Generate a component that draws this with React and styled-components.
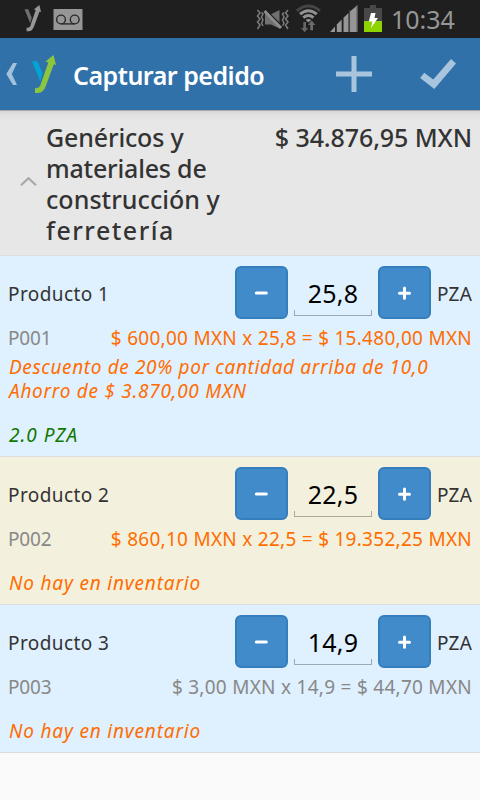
import React from 'react';
import styled, { createGlobalStyle } from 'styled-components';

const GlobalStyle = createGlobalStyle`
  * { box-sizing: border-box; }
  body {
    margin: 0;
    background: #fafafa;
    font-family: "Noto Sans", sans-serif;
    color: #333;
  }
`;

const Screen = styled.div`
  display: flex;
  flex-direction: column;
  width: 480px;
  height: 800px;
  overflow: hidden;
  background: #fafafa;
`;

const StatusBar = styled.div`
  display: flex;
  align-items: flex-start;
  height: 38px;
  flex: none;
  padding-left: 24px;
  background: #1f1f1f;
`;

const StatusIcon = styled.svg`
  flex: none;
  margin-left: ${(p) => p.$gap || 0}px;
`;

const Clock = styled.span`
  margin-left: 8px;
  font-size: 25px;
  line-height: 38px;
  color: #969696;
`;

const ActionBar = styled.header`
  display: flex;
  align-items: center;
  height: 72px;
  flex: none;
  background: #3071a9;
`;

const BarTitle = styled.h1`
  flex: 1;
  margin: 0 0 0 16px;
  padding-top: 1px;
  font-size: 25px;
  line-height: 34px;
  font-weight: 600;
  letter-spacing: -0.5px;
  white-space: nowrap;
  color: #fff;
`;

const BarButton = styled.button`
  display: flex;
  padding: 0;
  border: 0;
  background: none;
`;

const GroupHeader = styled.section`
  display: flex;
  height: 146px;
  flex: none;
  padding: 12px 8px 0 20px;
  border-bottom: 1px solid #dfdfdf;
  background: linear-gradient(#a9a9a9 0, #a9a9a9 1px, #d6d6d6 1px, #e2e2e2 5px, #e7e7e7 12px);
`;

const Chevron = styled.svg`
  flex: none;
  margin: 54px 9px 0 0;
`;

const GroupTitle = styled.h2`
  width: 200px;
  margin: 0;
  font-size: 25px;
  line-height: 31px;
  font-weight: 500;
`;

const TitleLine = styled.span`
  display: block;
  letter-spacing: ${(p) => p.$spacing}px;
`;

const GroupTotal = styled.span`
  margin-left: auto;
  font-size: 25px;
  line-height: 31px;
  font-weight: 500;
  letter-spacing: -0.1px;
  white-space: nowrap;
`;

const Row = styled.section`
  flex: none;
  padding: 10px 8px 9px;
  border-bottom: 1px solid #dcdcdc;
  background: ${(p) => (p.$highlight ? '#f3f1dd' : '#dff0ff')};
  font-size: 19px;
  line-height: 24px;
`;

const QuantityLine = styled.div`
  display: flex;
  align-items: center;
  gap: 6px;
  height: 53px;
`;

const ProductName = styled.span`
  flex: 1;
  padding-top: 2px;
  letter-spacing: 0.4px;
`;

const StepButton = styled.button`
  display: flex;
  align-items: center;
  justify-content: center;
  width: 53px;
  height: 53px;
  padding: 0;
  border: 2px solid #357ebd;
  border-radius: 6px;
  background: #428bca;
`;

const Quantity = styled.div`
  display: flex;
  flex-direction: column;
  justify-content: flex-end;
  width: 78px;
  height: 53px;
  padding-bottom: 3px;
  font-size: 25px;
  line-height: 34px;
  letter-spacing: 0.2px;
  text-align: center;
  color: #000;
`;

const Underline = styled.div`
  height: 6px;
  border: 1px solid ${(p) => (p.$highlight ? '#aaa99b' : '#9ca8b3')};
  border-top: 0;
`;

const Unit = styled.span`
  width: 35px;
  padding-top: 2px;
  letter-spacing: 0.3px;
`;

const PriceLine = styled.div`
  display: flex;
  justify-content: space-between;
  margin-top: 7px;
  white-space: nowrap;
`;

const Code = styled.span`
  letter-spacing: -0.15px;
  color: #888;
`;

const Price = styled.span`
  letter-spacing: 0.27px;
  color: ${(p) => (p.$muted ? '#888' : '#ff6d00')};
`;

const Note = styled.p`
  margin: ${(p) => p.$top}px 0 0 1px;
  font-style: italic;
  letter-spacing: ${(p) => p.$spacing}px;
  white-space: nowrap;
  color: ${(p) => (p.$stock ? '#117700' : '#ff6d00')};
`;

const products = [
  {
    name: 'Producto 1', code: 'P001', quantity: '25,8',
    price: '$ 600,00 MXN x 25,8 = $ 15.480,00 MXN',
    notes: [
      { text: 'Descuento de 20% por cantidad arriba de 10,0', top: 5, spacing: 0.63 },
      { text: 'Ahorro de $ 3.870,00 MXN', top: 0, spacing: 0.72 },
      { text: '2.0 PZA', top: 20, spacing: 1, stock: true },
    ],
  },
  {
    name: 'Producto 2', code: 'P002', quantity: '22,5', highlight: true,
    price: '$ 860,10 MXN x 22,5 = $ 19.352,25 MXN',
    notes: [{ text: 'No hay en inventario', top: 20, spacing: 0.82 }],
  },
  {
    name: 'Producto 3', code: 'P003', quantity: '14,9', muted: true,
    price: '$ 3,00 MXN x 14,9 = $ 44,70 MXN',
    notes: [{ text: 'No hay en inventario', top: 20, spacing: 0.82 }],
  },
];

const MinusIcon = () => (
  <svg width="15" height="15" viewBox="0 0 15 15" stroke="#fff" strokeWidth="3" strokeLinecap="round">
    <path d="M2.3 8H12.3" />
  </svg>
);

const PlusIcon = () => (
  <svg width="15" height="15" viewBox="0 0 15 15" stroke="#fff" strokeWidth="3" strokeLinecap="round">
    <path d="M2.5 8.2H12.5M7.5 3V13.2" />
  </svg>
);

const BrandMark = ({ left, right }) => (
  <>
    <path d="M0 6.3H5.4L10.5 18.5L8.3 26.5Z" fill={left} />
    <path d="M21.5 0L24 10L21.8 9.3L14.2 30Q11.5 38 6 38H3V33Q8 34 9.2 28L16.3 7.4L13.5 6.5Z" fill={right} />
  </>
);

function ProductRow({ product }) {
  return (
    <Row $highlight={product.highlight}>
      <QuantityLine>
        <ProductName>{product.name}</ProductName>
        <StepButton aria-label="Menos"><MinusIcon /></StepButton>
        <Quantity>
          {product.quantity}
          <Underline $highlight={product.highlight} />
        </Quantity>
        <StepButton aria-label="Más"><PlusIcon /></StepButton>
        <Unit>PZA</Unit>
      </QuantityLine>
      <PriceLine>
        <Code>{product.code}</Code>
        <Price $muted={product.muted}>{product.price}</Price>
      </PriceLine>
      {product.notes.map((n) => (
        <Note key={n.text} $top={n.top} $spacing={n.spacing} $stock={n.stock}>{n.text}</Note>
      ))}
    </Row>
  );
}

export default function App() {
  return (
    <Screen>
      <GlobalStyle />
      <StatusBar>
        <StatusIcon width="17" height="38" viewBox="0 0 17 38">
          <g transform="translate(0.5 5) scale(.69)"><BrandMark left="#6f6f6f" right="#969696" /></g>
        </StatusIcon>
        <StatusIcon $gap={12} width="30" height="38" viewBox="0 0 30 38">
          <path d="M.5 9H29.5V30H.5Z" fill="#969696" />
          <g fill="none" stroke="#292929" strokeWidth="1.4">
            <circle cx="8" cy="19.5" r="4.4" />
            <circle cx="21.7" cy="19.5" r="4.4" />
            <path d="M8 23.9H21.7" />
          </g>
        </StatusIcon>
        <StatusIcon $gap={173} width="33" height="38" viewBox="0 0 33 38">
          <g fill="none" stroke="#7c7c7c" strokeWidth="1.5">
            <path d="M1.5 10L4 13L1.5 16L4 19L1.5 22L4 25L1.5 29" />
            <path d="M5.5 12.5L7 14L5.5 17L7 20L5.5 23L7 26" />
            <path d="M32 10L29.5 13L32 16L29.5 19L32 22L29.5 25L32 29" />
            <path d="M28 12.5L26.5 14L28 17L26.5 20L28 23L26.5 26" />
          </g>
          <path d="M9 14H15.5L23.5 10V28.5L15 24.5H9Z" fill="#707070" />
          <path d="M8 8.5L26 26.5" stroke="#1f1f1f" strokeWidth="2" />
          <path d="M8.5 11L25 28" stroke="#8d8d8d" strokeWidth="3" />
        </StatusIcon>
        <StatusIcon $gap={6} width="27" height="38" viewBox="0 0 27 38">
          <g fill="none" strokeWidth="3">
            <path d="M1.8 10.8Q13.4 1.2 25 10.8" stroke="#454545" />
            <path d="M5 14.2Q13.4 7.2 21.8 14.2" stroke="#929292" />
            <path d="M8.3 17.6Q13.4 13.4 18.5 17.6" stroke="#929292" />
          </g>
          <path d="M10.6 20Q13.4 17.8 16.2 20L13.4 22.5Z" fill="#929292" />
          <path d="M8.3 22H11V28H13.3L9.7 32.3L6 28H8.3Z" fill="#666" />
          <path d="M15.3 30.3V25H13L16.7 20.5L20.4 25H18V30.3Z" fill="#6c6c6c" />
        </StatusIcon>
        <StatusIcon $gap={7} width="30" height="38" viewBox="0 0 30 38">
          <g fill="#969696">
            <path d="M1 32L6 26.5V32Z" />
            <path d="M7.8 24.5L12.7 19.5V32H7.8Z" />
            <path d="M14.5 17.8L19.5 13V32H14.5Z" />
            <path d="M21 11.5L28.5 5V32H21Z" />
          </g>
          <path d="M20.6 10V32M27.9 5V32" stroke="#555" strokeWidth=".8" />
        </StatusIcon>
        <StatusIcon $gap={4} width="20" height="38" viewBox="0 0 20 38">
          <path d="M1 8H7V5H13V8H19V21H1Z" fill="#484848" />
          <path d="M1 21H19V32H1Z" fill="#8fd400" />
          <path d="M8 13H12.5L11.5 18H15L8 28L9.5 21.5H5.8Z" fill="#fff" />
        </StatusIcon>
        <Clock>10:34</Clock>
      </StatusBar>

      <ActionBar>
        <StatusIcon $gap={6} width="12" height="72" viewBox="0 0 12 72">
          <path d="M7 25H11L5.8 36L11 47H7L.3 36Z" fill="#a3c1db" />
        </StatusIcon>
        <StatusIcon $gap={14} width="25" height="72" viewBox="0 0 25 72">
          <g transform="translate(0 17)"><BrandMark left="#00a5d3" right="#8cc63f" /></g>
        </StatusIcon>
        <BarTitle>Capturar pedido</BarTitle>
        <BarButton aria-label="Agregar">
          <svg width="84" height="72" viewBox="0 0 84 72">
            <path d="M0 36H36M18 18V54" stroke="#a9c5de" strokeWidth="5" />
          </svg>
        </BarButton>
        <BarButton aria-label="Aceptar">
          <svg width="60" height="72" viewBox="0 0 60 72">
            <path d="M0.2 40L4.2 34.8L13.3 41.5L31 21L36 25.5L14.3 51Z" fill="#a9c5de" />
          </svg>
        </BarButton>
      </ActionBar>

      <GroupHeader>
        <Chevron width="17" height="11" viewBox="0 0 17 11">
          <path d="M1 9.3L8.5 2.2L16 9.3" fill="none" stroke="#a8a8a8" strokeWidth="2.2" />
        </Chevron>
        <GroupTitle>
          <TitleLine $spacing={-0.15}>Genéricos y</TitleLine>
          <TitleLine $spacing={-0.2}>materiales de</TitleLine>
          <TitleLine $spacing={0.05}>construcción y</TitleLine>
          <TitleLine $spacing={1.5}>ferretería</TitleLine>
        </GroupTitle>
        <GroupTotal>$ 34.876,95 MXN</GroupTotal>
      </GroupHeader>

      {products.map((p) => <ProductRow key={p.code} product={p} />)}
    </Screen>
  );
}
